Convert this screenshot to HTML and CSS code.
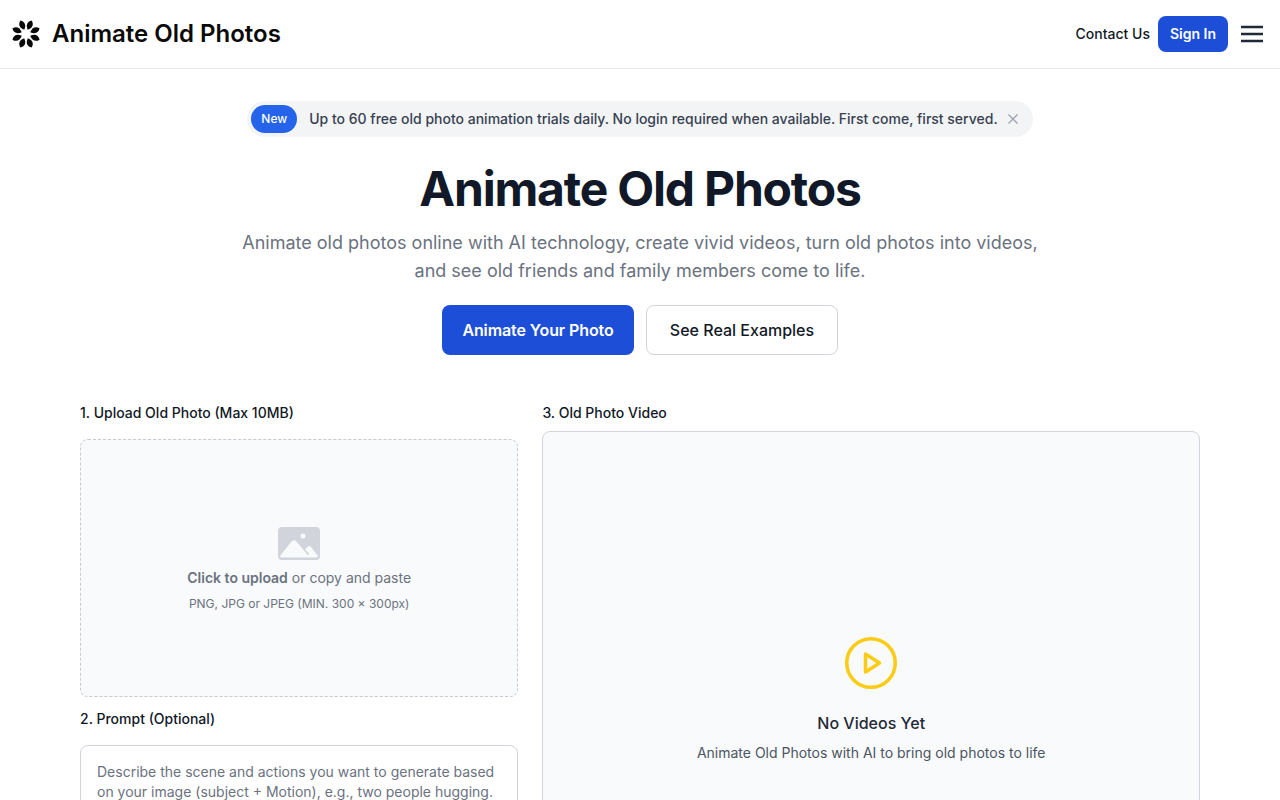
FILE: index.html
```html
<!DOCTYPE html>
<html lang="en">
<head>
  <meta charset="UTF-8">
  <title>Animate Old Photos</title>
  <link rel="stylesheet" href="styles.css">
</head>
<body>
  <header class="site-header">
    <a class="brand" href="#">
      <svg class="brand-icon" viewBox="0 0 28 30" aria-hidden="true">
        <g fill="#0a0a0a">
          <path d="M14 .3C18 3.200 17.600 7 14 10.400C10.400 7 10 3.200 14 .3z" transform="rotate(-22.500 14 15)"/>
          <path d="M14 .3C18 3.200 17.600 7 14 10.400C10.400 7 10 3.200 14 .3z" transform="rotate(22.500 14 15)"/>
          <path d="M14 .3C18 3.200 17.600 7 14 10.400C10.400 7 10 3.200 14 .3z" transform="rotate(67.500 14 15)"/>
          <path d="M14 .3C18 3.200 17.600 7 14 10.400C10.400 7 10 3.200 14 .3z" transform="rotate(112.500 14 15)"/>
          <path d="M14 .3C18 3.200 17.600 7 14 10.400C10.400 7 10 3.200 14 .3z" transform="rotate(157.500 14 15)"/>
          <path d="M14 .3C18 3.200 17.600 7 14 10.400C10.400 7 10 3.200 14 .3z" transform="rotate(202.500 14 15)"/>
          <path d="M14 .3C18 3.200 17.600 7 14 10.400C10.400 7 10 3.200 14 .3z" transform="rotate(247.500 14 15)"/>
          <path d="M14 .3C18 3.200 17.600 7 14 10.400C10.400 7 10 3.200 14 .3z" transform="rotate(292.500 14 15)"/>
        </g>
      </svg>
      <span class="brand-name">Animate Old Photos</span>
    </a>
    <nav class="header-nav">
      <a class="contact-link" href="#">Contact Us</a>
      <a class="signin-btn" href="#">Sign In</a>
      <button class="menu-btn" aria-label="Menu">
        <svg viewBox="0 0 22 18" width="22" height="18" aria-hidden="true">
          <path d="M0 2h22M0 9h22M0 16h22" stroke="#1f2937" stroke-width="2.600" fill="none"/>
        </svg>
      </button>
    </nav>
  </header>

  <main class="page">
    <section class="hero">
      <div class="notice">
        <span class="notice-badge">New</span>
        <span class="notice-text">Up to 60 free old photo animation trials daily. No login required when available. First come, first served.</span>
        <svg class="notice-close" viewBox="0 0 10 10" width="10" height="10" aria-hidden="true">
          <path d="M.5.5l9 9M9.500.5l-9 9" stroke="#9ca3af" stroke-width="1.300" fill="none"/>
        </svg>
      </div>
      <h1>Animate Old Photos</h1>
      <p class="hero-sub">Animate old photos online with AI technology, create vivid videos, turn old photos into videos,<br>and see old friends and family members come to life.</p>
      <div class="hero-actions">
        <a class="btn btn-primary" href="#">Animate Your Photo</a>
        <a class="btn btn-outline" href="#">See Real Examples</a>
      </div>
    </section>

    <section class="tool">
      <div class="tool-left">
        <h3 class="field-label">1. Upload Old Photo (Max 10MB)</h3>
        <div class="upload-box">
          <svg class="upload-icon" viewBox="0 0 42 33" width="42" height="33" aria-hidden="true">
            <path fill="#d1d5db" fill-rule="evenodd" d="M4 0h34a4 4 0 0 1 4 4v25a4 4 0 0 1-4 4H4a4 4 0 0 1-4-4V4a4 4 0 0 1 4-4zm18.500 9a2.500 2.500 0 1 0 5 0 2.500 2.500 0 1 0-5 0zM3.500 30.500h35c1.200 0 1.800-1.200 1-2.200l-6.800-8.600c-.8-1-2.200-1-3 0L27 22.500l4 4c.6.800-.6 2-1.500 1.200L18 14c-1-1-3-1-4 0L2.500 28.300c-.8 1 -.2 2.200 1 2.200z"/>
          </svg>
          <p class="upload-title"><strong>Click to upload</strong> or copy and paste</p>
          <p class="upload-hint">PNG, JPG or JPEG (MIN. 300 × 300px)</p>
        </div>
        <h3 class="field-label prompt-label">2. Prompt (Optional)</h3>
        <textarea class="prompt-input" rows="4" placeholder="Describe the scene and actions you want to generate based on your image (subject + Motion), e.g., two people hugging."></textarea>
      </div>
      <div class="tool-right">
        <h3 class="field-label">3. Old Photo Video</h3>
        <div class="video-box">
          <svg viewBox="0 0 52 52" width="52" height="52" aria-hidden="true">
            <circle cx="26" cy="26" r="24.250" fill="none" stroke="#facc15" stroke-width="3.500"/>
            <path d="M20.500 17L34.500 26L20.500 35z" fill="none" stroke="#facc15" stroke-width="3.500" stroke-linejoin="round"/>
          </svg>
          <h4>No Videos Yet</h4>
          <p>Animate Old Photos with AI to bring old photos to life</p>
        </div>
      </div>
    </section>
  </main>
</body>
</html>
```

FILE: styles.css
```css
* {
  box-sizing: border-box;
}
body {
  font-family: 'Inter', 'Liberation Sans', sans-serif;
  margin: 0;
  padding: 0;
  background-color: #fff;
  color: #111827;
}
a {
  text-decoration: none;
  color: inherit;
}
.site-header {
  display: flex;
  justify-content: space-between;
  align-items: center;
  height: 69px;
  padding: 0 17px 0 12px;
  border-bottom: 1px solid #e5e7eb;
}
.brand {
  display: flex;
  align-items: center;
  gap: 12px;
  font-size: 24px;
  font-weight: 600;
  color: #0a0a0a;
}
.brand-icon {
  width: 28px;
  height: 30px;
}
.brand-name {
  padding-bottom: 2px;
}
.header-nav {
  display: flex;
  align-items: center;
}
.contact-link {
  padding-bottom: 2px;
  font-size: 14px;
  font-weight: 500;
  margin-right: 8px;
}
.signin-btn {
  display: block;
  padding: 0 12px;
  line-height: 36px;
  font-size: 14px;
  font-weight: 600;
  color: #fff;
  background-color: #1d4ed8;
  border-radius: 8px;
}
.menu-btn {
  display: flex;
  padding: 0;
  margin-left: 13px;
  background: none;
  border: none;
}
.page {
  max-width: 1152px;
  margin: 0 auto;
  padding: 32px 16px 48px;
}
.hero {
  display: flex;
  flex-direction: column;
  align-items: center;
  text-align: center;
}
.notice {
  display: flex;
  align-items: center;
  height: 36px;
  padding: 0 15px 0 4px;
  background-color: #f3f4f6;
  border-radius: 18px;
}
.notice-badge {
  padding: 0 10px;
  line-height: 28px;
  font-size: 12px;
  font-weight: 500;
  color: #fff;
  background-color: #2563eb;
  border-radius: 14px;
}
.notice-text {
  margin: 0 10px 0 12px;
  padding-bottom: 2px;
  font-size: 14px;
  font-weight: 500;
  color: #374151;
}
.hero h1 {
  margin: 21px 0 0;
  font-size: 48px;
  line-height: 62px;
  font-weight: 700;
  letter-spacing: -1.2px;
}
.hero-sub {
  margin: 9px 0 0;
  font-size: 18px;
  line-height: 28px;
  color: #6b7280;
}
.hero-actions {
  display: flex;
  gap: 12px;
  margin-top: 20px;
}
.btn {
  display: block;
  width: 192px;
  line-height: 50px;
  font-size: 16px;
  font-weight: 600;
  border-radius: 8px;
}
.btn-primary {
  color: #fff;
  letter-spacing: -0.1px;
  background-color: #1d4ed8;
}
.btn-outline {
  line-height: 48px;
  font-weight: 500;
  background-color: #fff;
  border: 1px solid #d1d5db;
}
.tool {
  display: grid;
  grid-template-columns: 2fr 3fr;
  gap: 24px;
  margin-top: 48px;
}
.field-label {
  margin: 0;
  font-size: 14px;
  line-height: 20px;
  font-weight: 500;
}
.upload-box {
  display: flex;
  flex-direction: column;
  align-items: center;
  justify-content: center;
  height: 258px;
  margin-top: 16px;
  background-color: #f9fafb;
  border: 1px dashed #c6cad1;
  border-radius: 8px;
}
.upload-icon {
  margin-top: 2px;
}
.upload-title {
  margin: 8px 0 0;
  font-size: 14px;
  line-height: 20px;
  color: #6b7280;
}
.upload-title strong {
  font-weight: 600;
}
.upload-hint {
  margin: 8px 0 0;
  font-size: 12px;
  line-height: 16px;
  color: #6b7280;
}
.prompt-label {
  margin-top: 12px;
}
.prompt-input {
  display: block;
  width: 100%;
  height: 116px;
  margin-top: 16px;
  padding: 16px;
  font-family: inherit;
  font-size: 14px;
  line-height: 20px;
  color: #111827;
  background-color: #fff;
  border: 1px solid #d1d5db;
  border-radius: 8px;
  resize: none;
}
.prompt-input::placeholder {
  color: #6b7280;
  opacity: 1;
}
.video-box {
  display: flex;
  flex-direction: column;
  align-items: center;
  justify-content: center;
  height: 538px;
  margin-top: 8px;
  background-color: #f9fafb;
  border: 1px solid #d1d5db;
  border-radius: 8px;
}
.video-box h4 {
  margin: 22px 0 0;
  font-size: 16px;
  line-height: 24px;
  font-weight: 500;
  color: #1f2937;
}
.video-box p {
  margin: 8px 0 0;
  font-size: 14px;
  line-height: 20px;
  color: #4b5563;
}
```
